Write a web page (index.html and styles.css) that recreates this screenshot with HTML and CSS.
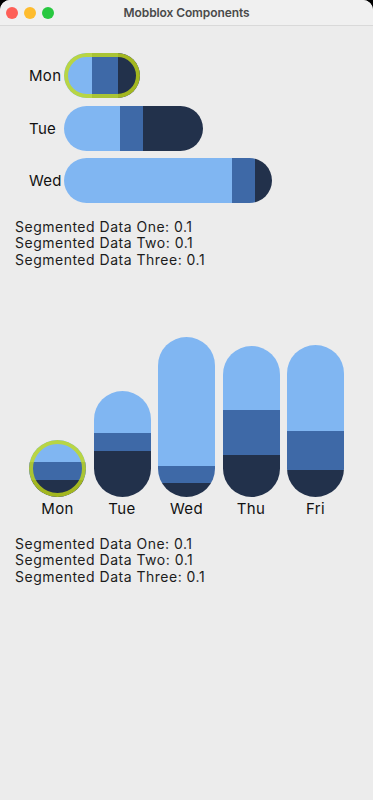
FILE: index.html
```html
<!DOCTYPE html>
<html>
<head>
<meta charset="utf-8">
<link rel="stylesheet" href="styles.css">
</head>
<body>
<div class="window">
  <div class="titlebar">
    <div class="lights">
      <span class="light red"></span>
      <span class="light yellow"></span>
      <span class="light green"></span>
    </div>
    <div class="title">Mobblox Components</div>
    <div></div>
  </div>
  <div class="content">
    <div class="hchart">
      <div class="hrow">
        <div class="hlabel">Mon</div>
        <div class="pill selected">
          <div class="seg s1" style="width:28px"></div>
          <div class="seg s2" style="width:26px"></div>
          <div class="seg s3" style="width:22px"></div>
        </div>
      </div>
      <div class="hrow">
        <div class="hlabel">Tue</div>
        <div class="pill">
          <div class="seg s1" style="width:56px"></div>
          <div class="seg s2" style="width:23px"></div>
          <div class="seg s3" style="width:60px"></div>
        </div>
      </div>
      <div class="hrow">
        <div class="hlabel">Wed</div>
        <div class="pill">
          <div class="seg s1" style="width:168px"></div>
          <div class="seg s2" style="width:23px"></div>
          <div class="seg s3" style="width:17px"></div>
        </div>
      </div>
    </div>
    <div class="info first">
      <div>Segmented Data One: 0.1</div>
      <div>Segmented Data Two: 0.1</div>
      <div>Segmented Data Three: 0.1</div>
    </div>
    <div class="vchart">
      <div class="vcol">
        <div class="vbar circle selected">
          <div class="seg s1" style="height:22px"></div>
          <div class="seg s2" style="height:18px"></div>
          <div class="seg s3" style="height:17px"></div>
        </div>
        <div class="vlabel">Mon</div>
      </div>
      <div class="vcol">
        <div class="vbar">
          <div class="seg s1" style="height:42px"></div>
          <div class="seg s2" style="height:18px"></div>
          <div class="seg s3" style="height:46px"></div>
        </div>
        <div class="vlabel">Tue</div>
      </div>
      <div class="vcol">
        <div class="vbar">
          <div class="seg s1" style="height:129px"></div>
          <div class="seg s2" style="height:17px"></div>
          <div class="seg s3" style="height:14px"></div>
        </div>
        <div class="vlabel">Wed</div>
      </div>
      <div class="vcol">
        <div class="vbar">
          <div class="seg s1" style="height:64px"></div>
          <div class="seg s2" style="height:45px"></div>
          <div class="seg s3" style="height:42px"></div>
        </div>
        <div class="vlabel">Thu</div>
      </div>
      <div class="vcol">
        <div class="vbar">
          <div class="seg s1" style="height:86px"></div>
          <div class="seg s2" style="height:39px"></div>
          <div class="seg s3" style="height:27px"></div>
        </div>
        <div class="vlabel">Fri</div>
      </div>
    </div>
    <div class="info second">
      <div>Segmented Data One: 0.1</div>
      <div>Segmented Data Two: 0.1</div>
      <div>Segmented Data Three: 0.1</div>
    </div>
  </div>
</div>
</body>
</html>
```

FILE: styles.css
```css
html, body {
  margin: 0;
  padding: 0;
  background: #000;
}

.window {
  width: 373px;
  height: 800px;
  background: #ececec;
  border-radius: 10px 10px 0 0;
  overflow: hidden;
  font-family: Inter, "Liberation Sans", sans-serif;
  color: #1c1c1c;
}

.titlebar {
  height: 25px;
  background: #f0f0f0;
  border-bottom: 1px solid #d9d9d9;
  display: grid;
  grid-template-columns: 1fr auto 1fr;
  align-items: center;
}

.lights {
  display: flex;
  gap: 6px;
  padding-left: 6px;
}

.light {
  width: 12px;
  height: 12px;
  border-radius: 50%;
  display: block;
}

.red { background: #fe5f57; }
.yellow { background: #febc2e; }
.green { background: #28c840; }

.title {
  font-size: 12px;
  font-weight: 600;
  color: #4a4a4a;
  letter-spacing: -0.1px;
}

.content {
  padding-top: 27px;
}

.hchart {
  display: flex;
  flex-direction: column;
  gap: 7.5px;
  padding-left: 29px;
}

.hrow {
  display: flex;
  align-items: center;
  height: 45px;
}

.hlabel {
  width: 35px;
  font-size: 15px;
  letter-spacing: 0.3px;
  color: #111;
}

.pill {
  display: flex;
  height: 45px;
  border-radius: 22.5px;
  overflow: hidden;
  position: relative;
}

.seg { flex: none; }
.s1 { background: #80b6f2; }
.s2 { background: #3e69a7; }
.s3 { background: #22314b; }

.selected::after {
  content: "";
  position: absolute;
  inset: 0;
  border: 4px solid rgba(200, 222, 20, 0.78);
  border-radius: inherit;
}

.info {
  padding-left: 15px;
  font-size: 14px;
  line-height: 16.5px;
  letter-spacing: 0.5px;
}

.info.first {
  margin-top: 15.5px;
}

.vchart {
  display: flex;
  align-items: flex-end;
  gap: 7.5px;
  padding-left: 29px;
  margin-top: 68.5px;
}

.vcol {
  width: 57px;
  display: flex;
  flex-direction: column;
  align-items: center;
  gap: 3px;
}

.vbar {
  width: 57px;
  display: flex;
  flex-direction: column;
  border-radius: 28.5px;
  overflow: hidden;
  position: relative;
}

.vbar.circle {
  border-radius: 50%;
}

.vlabel {
  font-size: 15px;
  line-height: 18px;
  letter-spacing: 0.4px;
  color: #111;
}

.info.second {
  margin-top: 18px;
}
```
